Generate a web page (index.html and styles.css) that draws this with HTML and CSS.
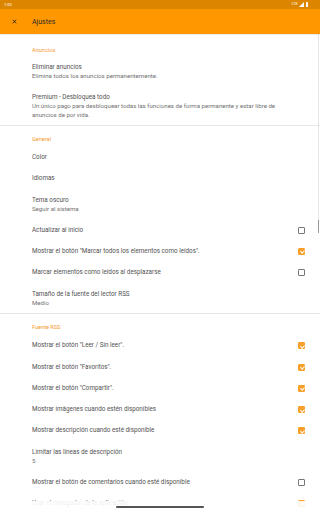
FILE: index.html
```html
<!DOCTYPE html>
<html lang="es">
<head>
<meta charset="utf-8">
<link rel="stylesheet" href="styles.css">
</head>
<body>
<div class="statusbar">
  <span class="time">1:00</span>
  <span class="status-icons">
    <span class="lte">LTE</span>
    <svg class="signal" viewBox="0 0 10 10" width="5" height="5"><path d="M10 0 L10 10 L0 10 Z" fill="#fff"/></svg>
    <span class="battery"></span>
  </span>
</div>
<header class="appbar">
  <svg class="close" viewBox="0 0 24 24" width="7" height="7"><path d="M19 6.41 17.59 5 12 10.59 6.41 5 5 6.41 10.59 12 5 17.59 6.41 19 12 13.41 17.59 19 19 17.59 13.41 12z" fill="#212121"/></svg>
  <span class="title">Ajustes</span>
</header>
<main class="content">
  <section class="group first">
    <div class="group-title">Anuncios</div>
    <div class="row two"><div class="text"><div class="t">Eliminar anuncios</div><div class="s">Elimina todos los anuncios permanentemente.</div></div></div>
    <div class="row three"><div class="text"><div class="t">Premium - Desbloquea todo</div><div class="s wrap">Un único pago para desbloquear todas las funciones de forma permanente y estar libre de anuncios de por vida.</div></div></div>
  </section>
  <section class="group">
    <div class="group-title">General</div>
    <div class="row"><div class="text"><div class="t">Color</div></div></div>
    <div class="row"><div class="text"><div class="t">Idiomas</div></div></div>
    <div class="row two"><div class="text"><div class="t">Tema oscuro</div><div class="s">Seguir al sistema</div></div></div>
    <div class="row"><div class="text"><div class="t">Actualizar al inicio</div></div><span class="cb"></span></div>
    <div class="row"><div class="text"><div class="t">Mostrar el botón "Marcar todos los elementos como leídos".</div></div><span class="cb on"></span></div>
    <div class="row"><div class="text"><div class="t">Marcar elementos como leídos al desplazarse</div></div><span class="cb"></span></div>
    <div class="row two"><div class="text"><div class="t">Tamaño de la fuente del lector RSS</div><div class="s">Medio</div></div></div>
  </section>
  <section class="group">
    <div class="group-title">Fuente RSS</div>
    <div class="row"><div class="text"><div class="t">Mostrar el botón "Leer / Sin leer".</div></div><span class="cb on"></span></div>
    <div class="row"><div class="text"><div class="t">Mostrar el botón "Favoritos".</div></div><span class="cb on"></span></div>
    <div class="row"><div class="text"><div class="t">Mostrar el botón "Compartir".</div></div><span class="cb on"></span></div>
    <div class="row"><div class="text"><div class="t">Mostrar imágenes cuando estén disponibles</div></div><span class="cb on"></span></div>
    <div class="row"><div class="text"><div class="t">Mostrar descripción cuando esté disponible</div></div><span class="cb on"></span></div>
    <div class="row two"><div class="text"><div class="t">Limitar las líneas de descripción</div><div class="s">5</div></div></div>
    <div class="row"><div class="text"><div class="t">Mostrar el botón de comentarios cuando esté disponible</div></div><span class="cb"></span></div>
    <div class="row"><div class="text"><div class="t">Usar el navegador de la aplicación</div></div><span class="cb on"></span></div>
  </section>
</main>
<div class="scroll-track"><div class="scroll-thumb"></div></div>
<div class="navbar"><div class="handle"></div></div>
</body>
</html>
```
FILE: styles.css
```css
* { box-sizing: border-box; }
html, body {
  margin: 0;
  padding: 0;
  width: 320px;
  height: 512px;
  overflow: hidden;
  background: #fff;
  font-family: Roboto, "Noto Sans", sans-serif;
}
.statusbar {
  height: 9px;
  background: #dc8500;
  display: flex;
  align-items: center;
  justify-content: space-between;
  padding: 0 12px 0 4px;
  color: #fff;
  font-size: 4px;
  line-height: 9px;
}
.status-icons { display: flex; align-items: center; gap: 1.5px; }
.lte { font-size: 3.6px; }
.battery { width: 2.5px; height: 4.5px; background: #fff; border-radius: 0.5px; }
.appbar {
  height: 25px;
  background: #ff9800;
  display: flex;
  align-items: center;
  padding-left: 10.5px;
  box-shadow: 0 0.5px 1.5px rgba(0,0,0,0.2);
  position: relative;
  z-index: 1;
}
.close { margin-right: 14.5px; }
.appbar .title { font-size: 7px; color: #2a2a2a; }
.group { border-bottom: 1px solid #e8e8e8; }
.group-title {
  height: 21px;
  padding: 9.5px 0 0 32px;
  font-size: 5.6px;
  line-height: 7px;
  color: #f79a2e;
}
.group.first .group-title { padding-top: 12.5px; height: 23px; }
.row {
  display: flex;
  align-items: center;
  padding: 0 15px 0 32px;
  min-height: 21.25px;
}
.row.two { min-height: 30px; }
.row.three { min-height: 38px; }
.text { flex: 1; min-width: 0; }
.t { font-size: 6.3px; line-height: 9px; color: #525252; white-space: nowrap; }
.s { font-size: 6.1px; line-height: 8.5px; color: #727272; white-space: nowrap; }
.s.wrap { white-space: normal; max-width: 262px; }
.cb {
  width: 7px;
  height: 7px;
  border: 0.9px solid #777;
  border-radius: 1px;
  flex: none;
  margin-left: 8px;
  position: relative;
}
.cb.on { background: #f9a02a; border-color: #f9a02a; }
.cb.on::after {
  content: "";
  position: absolute;
  left: 1.6px;
  top: 0.4px;
  width: 1.6px;
  height: 3.4px;
  border-right: 0.9px solid #fff;
  border-bottom: 0.9px solid #fff;
  transform: rotate(45deg);
}
.scroll-track {
  position: absolute;
  top: 34px;
  right: 1px;
  width: 1.5px;
  height: 199px;
  background: #e4e4e4;
}
.scroll-thumb {
  position: absolute;
  bottom: 0;
  left: 0;
  width: 100%;
  height: 13px;
  background: #9a9a9a;
}
.navbar {
  position: absolute;
  left: 0;
  right: 0;
  bottom: 0;
  height: 11px;
  background: rgba(255,255,255,0.9);
  display: flex;
  align-items: center;
  justify-content: center;
}
.handle {
  width: 88px;
  height: 1.5px;
  border-radius: 1px;
  background: #555;
  margin-top: 1px;
}
```
